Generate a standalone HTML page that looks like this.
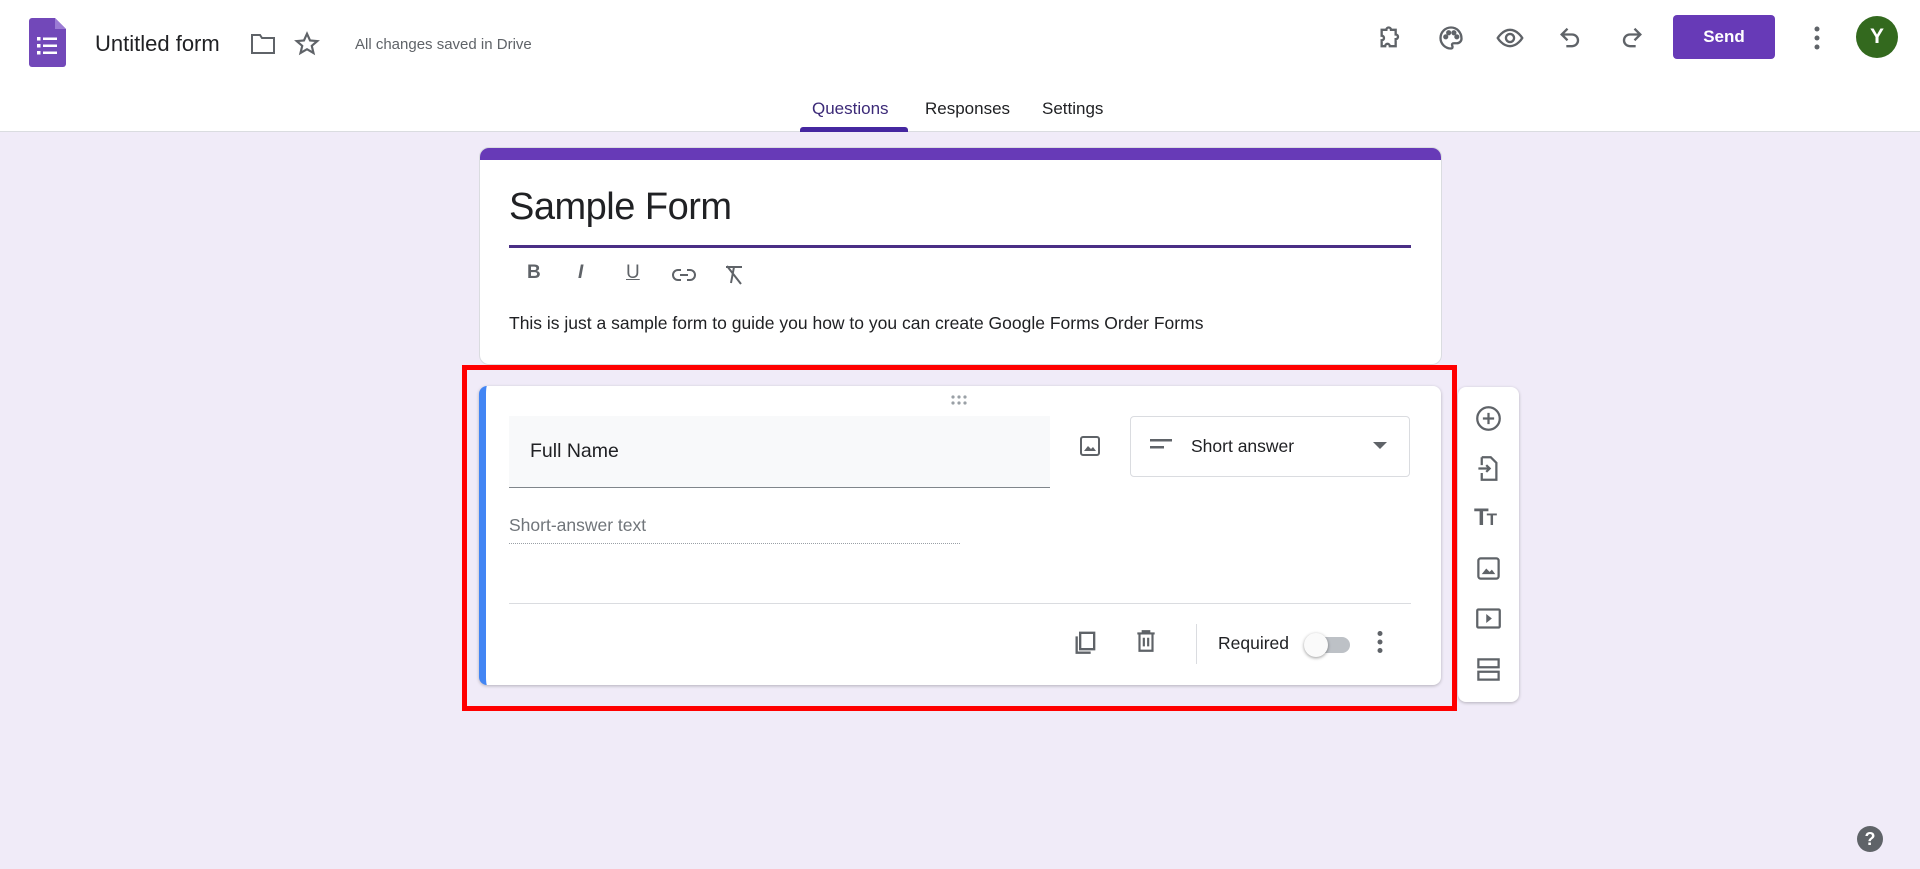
<!DOCTYPE html>
<html><head><meta charset="utf-8"><style>
*{margin:0;padding:0;box-sizing:border-box}
body{width:1920px;height:869px;overflow:hidden;background:#f0ebf8;font-family:"Liberation Sans",sans-serif;color:#202124;position:relative}
.abs{position:absolute}
header{position:absolute;left:0;top:0;width:1920px;height:132px;background:#fff;border-bottom:1px solid #dadce0}
.ic{position:absolute;fill:none;stroke:#5f6368;stroke-width:2}
.t{position:absolute;white-space:nowrap}
</style></head><body>
<header>
<svg class="abs" style="left:29px;top:18px" width="37" height="49" viewBox="0 0 37 49"><path d="M3 0H26L37 11V46a3 3 0 0 1-3 3H3a3 3 0 0 1-3-3V3a3 3 0 0 1 3-3z" fill="#7248b9"/><path d="M26 0V11H37z" fill="#9b7bd4"/><g fill="#fff"><rect x="8" y="19" width="3.5" height="3.5"/><rect x="14" y="19.5" width="14" height="2.5"/><rect x="8" y="26" width="3.5" height="3.5"/><rect x="14" y="26.5" width="14" height="2.5"/><rect x="8" y="33" width="3.5" height="3.5"/><rect x="14" y="33.5" width="14" height="2.5"/></g></svg>
<div class="t" style="left:95px;top:31px;font-size:22px;color:#202124">Untitled form</div>
<svg class="ic" style="left:250px;top:32px" width="26" height="24" viewBox="0 0 26 24"><path d="M2 3h8l2 3h12v15H2z"/></svg>
<svg class="ic" style="left:294px;top:31px" width="26" height="26" viewBox="0 0 24 24" stroke-width="1.6"><path d="M12 2.5l2.8 6.2 6.7.6-5.1 4.4 1.6 6.6L12 16.8 6 20.3l1.6-6.6-5.1-4.4 6.7-.6z"/></svg>
<div class="t" style="left:355px;top:36px;font-size:15px;color:#5f6368">All changes saved in Drive</div>
<svg class="ic" style="left:1377px;top:24px" width="28" height="28" viewBox="0 0 24 24"><path d="M4 5h4a2 2 0 0 1 4 0h4v4a2 2 0 0 1 0 4v6h-5a2 2 0 0 0-4 0H4v-5a2 2 0 0 0 0-4z"/></svg>
<svg class="ic" style="left:1437px;top:24px" width="28" height="28" viewBox="0 0 24 24"><path d="M12 3a9 9 0 0 0 0 18c1.5 0 1.5-1.5 1-2.5s0-2 1.5-2H17a4 4 0 0 0 4-4C21 7 17 3 12 3z"/><circle cx="7.5" cy="11" r="1.2" fill="#5f6368"/><circle cx="10" cy="7.5" r="1.2" fill="#5f6368"/><circle cx="14.5" cy="7.5" r="1.2" fill="#5f6368"/><circle cx="17" cy="11" r="1.2" fill="#5f6368"/></svg>
<svg class="ic" style="left:1495px;top:24px" width="30" height="28" viewBox="0 0 24 24"><path d="M1.5 12S5.5 5 12 5s10.5 7 10.5 7-4 7-10.5 7S1.5 12 1.5 12z"/><circle cx="12" cy="12" r="3.5"/></svg>
<svg class="ic" style="left:1557px;top:24px" width="28" height="28" viewBox="0 0 24 24"><path d="M9 4L4 9l5 5M4 9h9a5 5 0 0 1 0 10H8"/></svg>
<svg class="ic" style="left:1617px;top:24px" width="28" height="28" viewBox="0 0 24 24"><path d="M15 4l5 5-5 5M20 9h-9a5 5 0 0 0 0 10h5"/></svg>
<div class="abs" style="left:1673px;top:15px;width:102px;height:44px;background:#673ab7;border-radius:4px;color:#fff;font-size:17px;font-weight:bold;text-align:center;line-height:44px">Send</div>
<svg class="abs" style="left:1812px;top:25px" width="10" height="26"><circle cx="5" cy="4" r="2.5" fill="#5f6368"/><circle cx="5" cy="13" r="2.5" fill="#5f6368"/><circle cx="5" cy="22" r="2.5" fill="#5f6368"/></svg>
<div class="abs" style="left:1856px;top:16px;width:42px;height:42px;border-radius:50%;background:#33691e;color:#fff;font-size:21px;font-weight:bold;text-align:center;line-height:42px">Y</div>
<div class="t" style="left:812px;top:99px;font-size:17px;color:#3c2a78">Questions</div>
<div class="abs" style="left:800px;top:127px;width:108px;height:5px;background:#4527a0;border-radius:3px 3px 0 0"></div>
<div class="t" style="left:925px;top:99px;font-size:17px;color:#202124">Responses</div>
<div class="t" style="left:1042px;top:99px;font-size:17px;color:#202124">Settings</div>
</header>

<div class="abs" style="left:479px;top:147px;width:963px;height:218px;background:#fff;border-radius:10px;border:1px solid #dadce0;overflow:hidden">
 <div style="height:12px;background:#673ab7"></div>
</div>
<div class="t" style="left:509px;top:186px;font-size:38px;color:#202124;letter-spacing:-0.5px">Sample Form</div>
<div class="abs" style="left:509px;top:245px;width:902px;height:3px;background:#4a2f85"></div>
<div class="t" style="left:527px;top:262px;font-size:19px;font-weight:bold;color:#5f6368">B</div>
<div class="t" style="left:578px;top:262px;font-size:19px;font-style:italic;font-weight:bold;color:#5f6368">I</div>
<div class="t" style="left:626px;top:262px;font-size:19px;color:#5f6368;text-decoration:underline">U</div>
<svg class="ic" style="left:672px;top:265px" width="24" height="20" viewBox="0 0 24 20"><path d="M9 5H6a5 5 0 0 0 0 10h3M15 5h3a5 5 0 0 1 0 10h-3M8 10h8"/></svg>
<svg class="ic" style="left:722px;top:263px" width="24" height="24" viewBox="0 0 24 24"><path d="M4 4h16M12 4l-3 16M5 3l14 18"/></svg>
<div class="t" style="left:509px;top:313px;font-size:17.5px;color:#202124">This is just a sample form to guide you how to you can create Google Forms Order Forms</div>

<div class="abs" style="left:462px;top:365px;width:995px;height:346px;border:5px solid #f00"></div>

<div class="abs" style="left:479px;top:386px;width:962px;height:299px;background:#fff;border-radius:8px;box-shadow:0 1px 3px rgba(0,0,0,.25);border-left:7px solid #4285f4"></div>
<svg class="abs" style="left:950px;top:394px" width="20" height="12"><g fill="#9aa0a6"><circle cx="3" cy="3" r="1.6"/><circle cx="9" cy="3" r="1.6"/><circle cx="15" cy="3" r="1.6"/><circle cx="3" cy="9" r="1.6"/><circle cx="9" cy="9" r="1.6"/><circle cx="15" cy="9" r="1.6"/></g></svg>
<div class="abs" style="left:509px;top:416px;width:541px;height:72px;background:#f8f9fa;border-bottom:1.5px solid #80868b"></div>
<div class="t" style="left:530px;top:440px;font-size:19.5px;color:#202124">Full Name</div>
<svg class="ic" style="left:1078px;top:434px" width="24" height="24" viewBox="0 0 24 24"><rect x="3" y="3" width="18" height="18" rx="2"/><path d="M6 17l4-5 3 3 2-2 3 4z" fill="#5f6368" stroke="none"/></svg>
<div class="abs" style="left:1130px;top:416px;width:280px;height:61px;border:1px solid #dadce0;border-radius:4px"></div>
<svg class="abs" style="left:1150px;top:437px" width="24" height="16"><rect x="0" y="2" width="22" height="2.5" fill="#5f6368"/><rect x="0" y="9" width="14" height="2.5" fill="#5f6368"/></svg>
<div class="t" style="left:1191px;top:436px;font-size:17.5px;color:#202124">Short answer</div>
<svg class="abs" style="left:1373px;top:442px" width="14" height="8"><path d="M0 0h14L7 7z" fill="#5f6368"/></svg>
<div class="t" style="left:509px;top:515px;font-size:17.5px;color:#70757a">Short-answer text</div>
<div class="abs" style="left:509px;top:543px;width:451px;height:0;border-bottom:1px dotted #9aa0a6"></div>
<div class="abs" style="left:509px;top:603px;width:902px;height:1px;background:#dadce0"></div>
<svg class="ic" style="left:1072px;top:627px" width="28" height="28" viewBox="0 0 24 24"><path d="M7 5h12v14H7zM4 8v14h12"/></svg>
<svg class="ic" style="left:1133px;top:627px" width="26" height="28" viewBox="0 0 24 24"><path d="M4 5h16M9 5V3h6v2M6 5v16h12V5M10 9v8M14 9v8"/></svg>
<div class="abs" style="left:1196px;top:624px;width:1px;height:40px;background:#dadce0"></div>
<div class="t" style="left:1218px;top:633px;font-size:17.5px;color:#202124">Required</div>
<div class="abs" style="left:1308px;top:637px;width:42px;height:16px;border-radius:8px;background:#bdc1c6"></div>
<div class="abs" style="left:1304px;top:633px;width:24px;height:24px;border-radius:50%;background:#fafafa;box-shadow:0 1px 3px rgba(0,0,0,.4)"></div>
<svg class="abs" style="left:1375px;top:630px" width="10" height="24"><circle cx="5" cy="3.5" r="2.5" fill="#5f6368"/><circle cx="5" cy="12" r="2.5" fill="#5f6368"/><circle cx="5" cy="20.5" r="2.5" fill="#5f6368"/></svg>

<div class="abs" style="left:1458px;top:387px;width:61px;height:315px;background:#fff;border-radius:8px;box-shadow:0 1px 3px rgba(0,0,0,.25)"></div>
<svg class="ic" style="left:1475px;top:405px" width="27" height="27" viewBox="0 0 24 24"><circle cx="12" cy="12" r="10"/><path d="M12 7v10M7 12h10"/></svg>
<svg class="ic" style="left:1475px;top:455px" width="27" height="27" viewBox="0 0 24 24"><path d="M6 2h8l5 5v15H6v-6M6 9V2M3 12h10M10 9l3 3-3 3"/></svg>
<div class="t" style="left:1474px;top:504px;font-size:24px;font-weight:bold;color:#5f6368;letter-spacing:-2px">T<span style="font-size:17px">T</span></div>
<svg class="ic" style="left:1475px;top:555px" width="27" height="27" viewBox="0 0 24 24"><rect x="3" y="3" width="18" height="18" rx="2"/><path d="M6 17l4-5 3 3 2-2 3 4z" fill="#5f6368" stroke="none"/></svg>
<svg class="ic" style="left:1475px;top:605px" width="27" height="27" viewBox="0 0 24 24"><rect x="2" y="4" width="20" height="16" rx="1"/><path d="M10 8v8l5-4z" fill="#5f6368" stroke="none"/></svg>
<svg class="ic" style="left:1475px;top:656px" width="27" height="27" viewBox="0 0 24 24"><rect x="3" y="3" width="18" height="7"/><rect x="3" y="14" width="18" height="7"/></svg>

<div class="abs" style="left:1857px;top:826px;width:26px;height:26px;border-radius:50%;background:#5f6368;color:#fff;font-size:18px;font-weight:bold;text-align:center;line-height:26px">?</div>
</body></html>
